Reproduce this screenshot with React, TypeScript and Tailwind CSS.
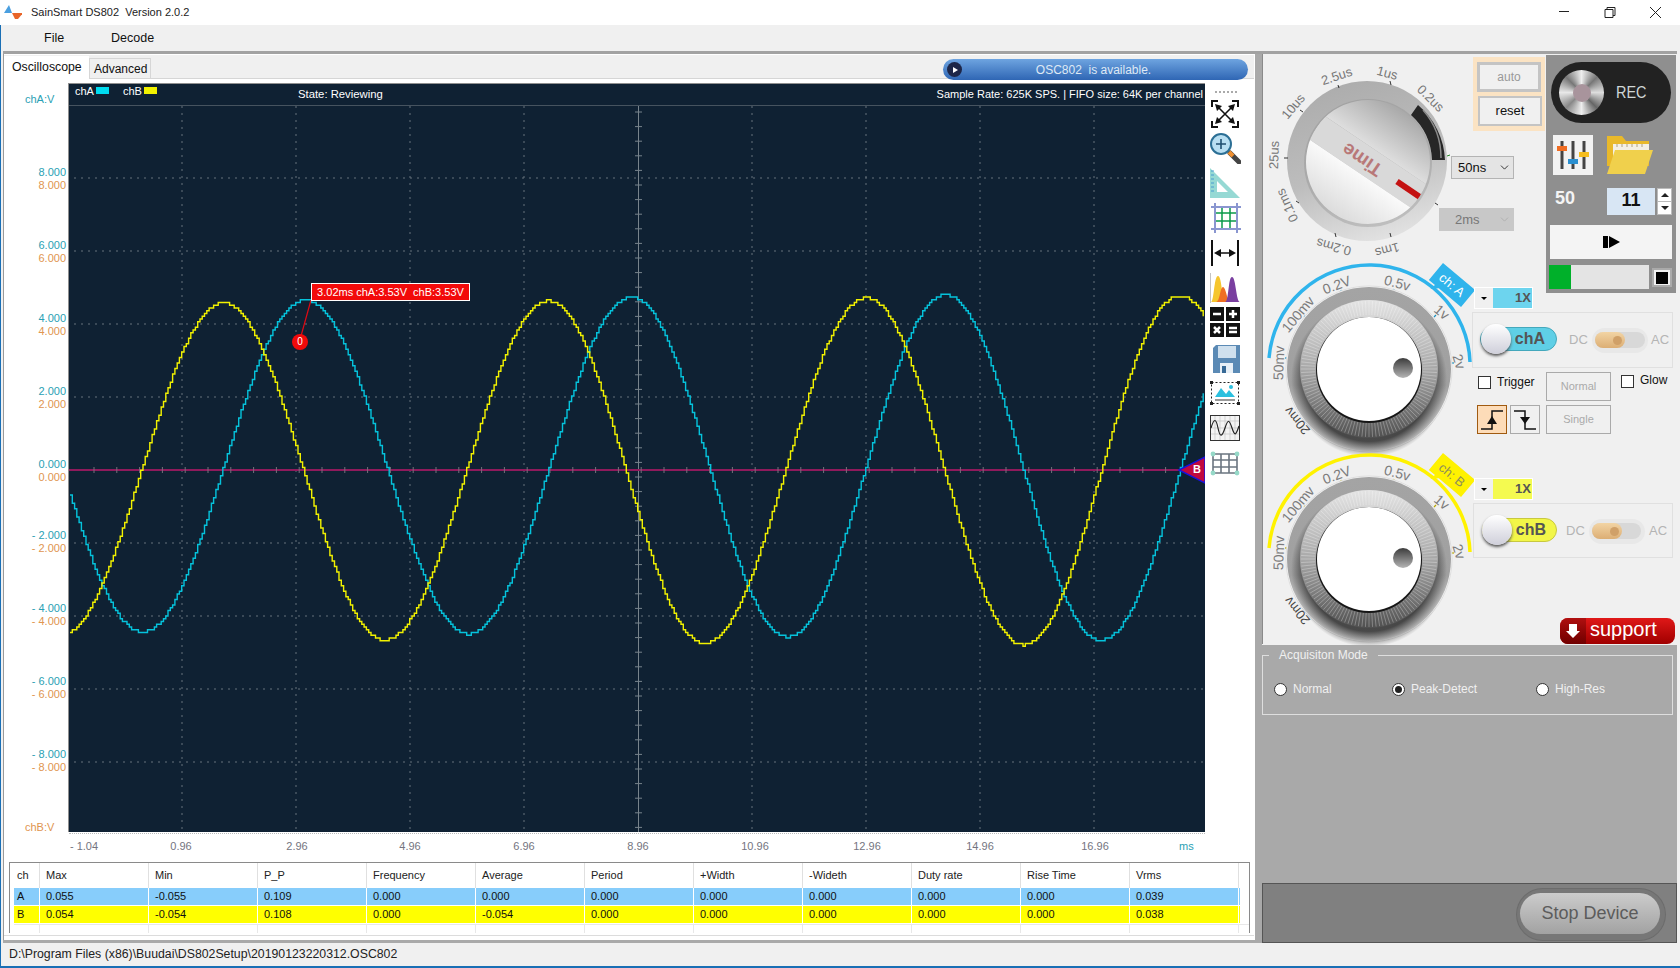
import { ChevronDown } from "lucide-react";

type Extreme = [number, number];

const cyanPoints: Extreme[] = [
  [-20, 302], [142, 632], [305, 300], [468, 634], [631, 297], [787, 637], [945, 295], [1100, 640], [1262, 292],
];
const yellowPoints: Extreme[] = [
  [60, 635], [223, 303], [384, 640], [548, 301], [704, 643], [866, 298], [1023, 645], [1179, 296], [1340, 648],
];

// stepped trace, looks like the sampled signal on the scope
function tracePath(points: Extreme[]) {
  let d = "";
  for (let x = 70; x <= 1205; x += 2.28) {
    const i = points.findIndex((p, n) => x >= p[0] && x < points[n + 1][0]);
    const [x0, y0] = points[i];
    const [x1, y1] = points[i + 1];
    const t = (1 - Math.cos((Math.PI * (x - x0)) / (x1 - x0))) / 2;
    const y = Math.round((y0 + (y1 - y0) * t) / 2.75) * 2.75;
    d += d ? `H${x.toFixed(1)}V${y.toFixed(1)}` : `M${x} ${y.toFixed(1)}`;
  }
  return d;
}

const gridX = [182, 296, 410, 524, 752, 866, 980, 1094];
const gridY = [178, 251, 324, 397, 543, 616, 689, 762];
const voltLabels = ["8.000", "6.000", "4.000", "2.000", "0.000", "- 2.000", "- 4.000", "- 6.000", "- 8.000"];
const timeLabels: [string, number][] = [
  ["- 1.04", 84], ["0.96", 181], ["2.96", 297], ["4.96", 410], ["6.96", 524],
  ["8.96", 638], ["10.96", 755], ["12.96", 867], ["14.96", 980], ["16.96", 1095],
];

const columns = ["ch", "Max", "Min", "P_P", "Frequency", "Average", "Period", "+Width", "-Wideth", "Duty rate", "Rise Time", "Vrms"];
const rowA = ["A", "0.055", "-0.055", "0.109", "0.000", "0.000", "0.000", "0.000", "0.000", "0.000", "0.000", "0.039"];
const rowB = ["B", "0.054", "-0.054", "0.108", "0.000", "-0.054", "0.000", "0.000", "0.000", "0.000", "0.000", "0.038"];

function Plot() {
  const hTicks = [];
  for (let x = 94; x < 1180; x += 22.8) hTicks.push(x);
  const vTicks = [];
  for (let y = 112; y < 832; y += 14.6) vTicks.push(y);
  return (
    <svg className="absolute left-[69px] top-[84px]" width="1136" height="748" viewBox="69 84 1136 748">
      <rect x="69" y="84" width="1136" height="748" fill="#0f2133" />
      <line x1="69" x2="1205" y1="105.5" y2="105.5" stroke="#46535f" />
      {gridX.map((x) => (
        <line key={x} x1={x} x2={x} y1="106" y2="832" stroke="#66727c" strokeDasharray="2 5" />
      ))}
      {gridY.map((y) => (
        <line key={y} x1="74" x2="1205" y1={y} y2={y} stroke="#66727c" strokeDasharray="2 5" />
      ))}
      <line x1="638.5" x2="638.5" y1="106" y2="832" stroke="#77838c" />
      {vTicks.map((y) => (
        <line key={y} x1="635" x2="642" y1={y} y2={y} stroke="#77838c" />
      ))}
      <line x1="69" x2="1180" y1="470" y2="470" stroke="#8f1a5c" strokeWidth="2" />
      {hTicks.map((x) => (
        <line key={x} x1={x} x2={x} y1="467" y2="473" stroke="#77707c" />
      ))}
      <path d={tracePath(cyanPoints)} fill="none" stroke="#05c3dc" strokeWidth="1.4" />
      <path d={tracePath(yellowPoints)} fill="none" stroke="#f2f200" strokeWidth="1.4" />
      <polygon points="1179,470 1205,457 1205,483" fill="#c0083f" stroke="#1414e0" strokeWidth="1.5" />
      <line x1="311" y1="300" x2="301" y2="336" stroke="#e00a14" strokeWidth="1.2" />
      <circle cx="300" cy="342" r="8" fill="#f20a0a" />
    </svg>
  );
}

function TimeKnob() {
  const ticks: [number, number, number, number][] = [
    [1338, 85, 1339, 88], [1390, 81, 1391, 85], [1300, 110, 1303, 112], [1284, 158, 1288, 158],
    [1296, 201, 1299, 203], [1335, 233, 1336, 237], [1390, 233, 1391, 237], [1435, 203, 1438, 205],
  ];
  const labels: [string, number, number, number][] = [
    ["2.5us", 1337, 77, -18], ["1us", 1387, 74, 15], ["0.2us", 1430, 99, 45], ["10us", 1294, 107, -50],
    ["25us", 1275, 155, -88], ["0.1ms", 1288, 205, -115], ["0.2ms", 1334, 246, -165], ["1ms", 1387, 249, 165],
  ];
  return (
    <svg className="absolute left-[1262px] top-[60px]" width="210" height="205" viewBox="1262 60 210 205">
      <defs>
        <linearGradient id="timeRing" x1="0.3" y1="0" x2="0.6" y2="1">
          <stop offset="0" stopColor="#acacac" />
          <stop offset="0.55" stopColor="#bdbdbd" />
          <stop offset="1" stopColor="#e2e2e2" />
        </linearGradient>
        <linearGradient id="timeTop" x1="0" y1="0" x2="0" y2="1">
          <stop offset="0" stopColor="#a9a9a9" />
          <stop offset="1" stopColor="#dedede" />
        </linearGradient>
        <linearGradient id="timeLow" x1="0" y1="0" x2="0" y2="1">
          <stop offset="0" stopColor="#fafafa" />
          <stop offset="1" stopColor="#dcdcdc" />
        </linearGradient>
        <clipPath id="timeClip">
          <circle cx="0" cy="0" r="62" />
        </clipPath>
      </defs>
      <circle cx="1367" cy="161" r="80" fill="url(#timeRing)" />
      <path d="M1418 105 A76 76 0 0 1 1445 160 L1432 160 A64 64 0 0 0 1411 115 Z" fill="#262626" />
      <path d="M1423 110 A72 72 0 0 1 1441 158" fill="none" stroke="#8a8a8a" strokeWidth="1.5" />
      <circle cx="1368" cy="163" r="64" fill="#8a8a8a" opacity="0.35" />
      <g transform="translate(1368 162) rotate(34)" clipPath="url(#timeClip)">
        <rect x="-62" y="-62" width="124" height="48" fill="url(#timeTop)" />
        <rect x="-62" y="-14" width="124" height="28" fill="#d9d9d9" />
        <rect x="-62" y="14" width="124" height="48" fill="url(#timeLow)" />
        <rect x="35" y="-3" width="28" height="6" fill="#c41212" />
        <text x="-6" y="0" transform="rotate(180 -6 0)" textAnchor="middle" fontSize="19" fontWeight="700" fill="#b87878" dominantBaseline="middle">
          Time
        </text>
      </g>
      {ticks.map(([x1, y1, x2, y2]) => (
        <line key={x1} x1={x1} y1={y1} x2={x2} y2={y2} stroke="#333" />
      ))}
      <line x1="1447" y1="156" x2="1450" y2="155" stroke="#2a8a2a" />
      {labels.map(([t, x, y, r]) => (
        <text key={t} x={x} y={y} transform={`rotate(${r} ${x} ${y})`} textAnchor="middle" dominantBaseline="middle" fontSize="13" fill="#777">
          {t}
        </text>
      ))}
    </svg>
  );
}

type DialProps = {
  id: string;
  top: string;
  color: string;
  tick: string;
  tag: string;
  tagText: string;
};

function Dial({ id, top, color, tick, tag, tagText }: DialProps) {
  const labels: [string, number, number, number][] = [
    ["50mv", 1280, 363, -88], ["100mv", 1299, 315, -50], ["0.2V", 1337, 286, -20],
    ["0.5v", 1397, 284, 15], ["1v", 1441, 313, 40], ["2v", 1458, 362, 72],
  ];
  const marks: [number, number, number, number][] = [
    [1285, 358, 1288, 358], [1304, 316, 1307, 318], [1341, 290, 1342, 293],
    [1394, 289, 1393, 292], [1436, 315, 1433, 318], [1451, 363, 1454, 363],
  ];
  const knurl = Array.from({ length: 120 }, (_, i) => (i * Math.PI) / 60);
  return (
    <svg className={`absolute left-[1262px] ${top}`} width="230" height="200" viewBox="1262 258 230 200">
      <defs>
        <linearGradient id={`${id}Outer`} x1="0" y1="0" x2="0" y2="1">
          <stop offset="0" stopColor="#a4a4a4" />
          <stop offset="0.6" stopColor="#a0a0a0" />
          <stop offset="1" stopColor="#ededed" />
        </linearGradient>
        <linearGradient id={`${id}Knurl`} x1="0" y1="0" x2="0" y2="1">
          <stop offset="0" stopColor="#e4e4e4" />
          <stop offset="0.5" stopColor="#a8a8a8" />
          <stop offset="1" stopColor="#505050" />
        </linearGradient>
        <radialGradient id={`${id}Shade`} cx="0.5" cy="0.5" r="0.5">
          <stop offset="0.8" stopColor="#2e2e2e" stopOpacity="0.85" />
          <stop offset="1" stopColor="#2e2e2e" stopOpacity="0" />
        </radialGradient>
        <linearGradient id={`${id}Dimple`} x1="0" y1="0" x2="0" y2="1">
          <stop offset="0" stopColor="#3c3c3c" />
          <stop offset="1" stopColor="#b4b4b4" />
        </linearGradient>
      </defs>
      <path d="M1269 358 A100.68 100.68 0 0 1 1470 362" fill="none" stroke={color} strokeWidth="3.5" />
      {marks.map(([x1, y1, x2, y2]) => (
        <line key={x1} x1={x1} y1={y1} x2={x2} y2={y2} stroke={tick} strokeWidth="1.2" />
      ))}
      <circle cx="1369" cy="369" r="83" fill="#fafafa" stroke="#dedede" />
      <circle cx="1369" cy="369" r="82" fill={`url(#${id}Outer)`} />
      <circle cx="1369" cy="379" r="78" fill={`url(#${id}Shade)`} />
      <circle cx="1369" cy="369" r="69" fill={`url(#${id}Knurl)`} />
      {knurl.map((a) => (
        <line
          key={a}
          x1={1369 + Math.cos(a) * 54}
          y1={369 + Math.sin(a) * 54}
          x2={1369 + Math.cos(a) * 68}
          y2={369 + Math.sin(a) * 68}
          stroke="#ffffff"
          strokeOpacity="0.28"
        />
      ))}
      <circle cx="1369" cy="370" r="53" fill="#161616" />
      <circle cx="1369" cy="369" r="52" fill="#ffffff" />
      <circle cx="1403" cy="368" r="10" fill={`url(#${id}Dimple)`} />
      {labels.map(([t, x, y, r]) => (
        <text key={t} x={x} y={y} transform={`rotate(${r} ${x} ${y})`} textAnchor="middle" dominantBaseline="middle" fontSize="14" fill="#7c7c7c">
          {t}
        </text>
      ))}
      <text x="1298" y="420" transform="rotate(-130 1298 420)" textAnchor="middle" dominantBaseline="middle" fontSize="13" fill="#444">
        20mv
      </text>
      <g transform="translate(1452 285) rotate(40)">
        <polygon points="-21,-11 21,-11 21,11 -8,11 -14,17 -13,11 -21,11" fill={color} />
        <text x="0" y="1" textAnchor="middle" dominantBaseline="middle" fontSize="13" fill={tagText}>
          {tag}
        </text>
      </g>
    </svg>
  );
}

function ToolIcons() {
  return (
    <>
      <div className="absolute left-[1215px] top-[91px] w-[22px] border-t-2 border-dotted border-[#aaa]" />
      <svg className="absolute left-[1211px] top-[100px]" width="28" height="28" viewBox="0 0 28 28" fill="none" stroke="#111">
        <path d="M1 7V1H7M21 1H27V7M27 21V27H21M7 27H1V21" strokeWidth="2" />
        <path d="M6 6L22 22M22 6L6 22" strokeWidth="1.6" />
        <path d="M4 4L11 6L6 11ZM24 4L17 6L22 11ZM24 24L17 22L22 17ZM4 24L11 22L6 17Z" fill="#111" stroke="none" />
      </svg>
      <svg className="absolute left-[1210px] top-[133px]" width="31" height="31" viewBox="0 0 31 31" fill="none">
        <line x1="20" y1="20" x2="29" y2="29" stroke="#444" strokeWidth="5" strokeLinecap="round" />
        <line x1="19" y1="19" x2="23" y2="23" stroke="#f09030" strokeWidth="4" />
        <circle cx="11" cy="11" r="10" fill="#b8dff2" stroke="#2b6f95" strokeWidth="2" />
        <path d="M6 11H16M11 6V16" stroke="#1f4f70" strokeWidth="1.6" />
      </svg>
      <svg className="absolute left-[1210px] top-[168px]" width="30" height="30" viewBox="0 0 30 30">
        <path d="M0 0L30 30H0ZM7 13V24H18Z" fill="#96d9d4" fillRule="evenodd" />
        <path d="M1 3H4M1 7H4M1 11H4M1 15H4M1 19H4M1 23H4" stroke="#4a9ccf" />
      </svg>
      <svg className="absolute left-[1211px] top-[203px]" width="30" height="30" viewBox="0 0 30 30" fill="none">
        <path d="M4 0V30M26 0V30M0 4H30M0 26H30" stroke="#8a96d0" strokeWidth="2" />
        <path d="M5 10H25M5 18H25M11 5V25M19 5V25" stroke="#0a9a4a" strokeWidth="1.5" />
      </svg>
      <svg className="absolute left-[1211px] top-[240px]" width="28" height="26" viewBox="0 0 28 26" fill="none">
        <path d="M1 0V26M27 0V26" stroke="#111" strokeWidth="2" />
        <path d="M5 13H23" stroke="#111" strokeWidth="1.5" />
        <path d="M3 13L10 9V17ZM25 13L18 9V17Z" fill="#111" />
      </svg>
      <svg className="absolute left-[1210px] top-[273px]" width="30" height="30" viewBox="0 0 30 30">
        <path d="M0 0V30" stroke="#888" />
        <path d="M1 29C4 29 4 3 8 3C12 3 12 29 15 29Z" fill="#f6c62e" />
        <path d="M6 29C10 29 10 14 13 14C16 14 17 29 21 29Z" fill="#ef6f24" />
        <path d="M15 29C19 29 18 4 22 4C26 4 26 29 30 29Z" fill="#7a3fa0" />
      </svg>
      <svg className="absolute left-[1210px] top-[307px]" width="30" height="30" viewBox="0 0 30 30">
        <rect width="14" height="14" fill="#111" />
        <rect x="16" width="14" height="14" fill="#111" />
        <rect y="16" width="14" height="14" fill="#111" />
        <rect x="16" y="16" width="14" height="14" fill="#111" />
        <path d="M3 7H11M19 7H27M23 3V11M4 20L10 26M10 20L4 26M19 21H27M19 25H27" stroke="#fff" strokeWidth="2.5" />
      </svg>
      <svg className="absolute left-[1213px] top-[345px]" width="27" height="28" viewBox="0 0 27 28">
        <path d="M3 0H27V28H0V3Z" fill="#5b8ab5" />
        <rect x="5" y="1" width="18" height="12" fill="#cfe0ee" />
        <rect x="7" y="18" width="13" height="10" fill="#e8f0f7" />
        <rect x="9" y="21" width="4" height="7" fill="#386a96" />
      </svg>
      <svg className="absolute left-[1210px] top-[381px]" width="30" height="24" viewBox="0 0 30 24" fill="none">
        <rect x="1.5" y="1.5" width="27" height="21" stroke="#222" strokeDasharray="2 2" />
        <rect width="3" height="3" fill="#222" />
        <rect x="27" width="3" height="3" fill="#222" />
        <rect y="21" width="3" height="3" fill="#222" />
        <rect x="27" y="21" width="3" height="3" fill="#222" />
        <path d="M5 16L11 7L16 13L19 9L25 16Z" fill="#2bc0df" />
        <circle cx="21" cy="6" r="2" fill="#2bc0df" />
        <path d="M5 19H25" stroke="#777" strokeWidth="1.5" />
      </svg>
      <svg className="absolute left-[1210px] top-[415px]" width="30" height="26" viewBox="0 0 30 26" fill="none">
        <rect x="0.5" y="0.5" width="29" height="25" fill="#f4f4f4" stroke="#333" />
        <path d="M5 1V25M10 1V25M15 1V25M20 1V25M25 1V25M1 6H29M1 13H29M1 19H29" stroke="#c4c4c4" strokeWidth="0.7" />
        <path d="M1 13C4 3 6 3 8 13S12 22 15 13S19 4 22 13S26 20 29 11" stroke="#222" strokeWidth="1.2" />
      </svg>
      <svg className="absolute left-[1210px] top-[451px]" width="30" height="25" viewBox="0 0 30 25" fill="none">
        <path d="M3 3H27M3 9H27M3 16H27M3 22H27" stroke="#6b7580" strokeWidth="1.6" />
        <path d="M3 3V22M11 3V22M19 3V22M27 3V22" stroke="#6b7580" strokeWidth="1.6" />
        <circle cx="3" cy="3" r="2.4" fill="#96d9c8" />
        <circle cx="27" cy="3" r="2.4" fill="#96d9c8" />
        <circle cx="3" cy="22" r="2.4" fill="#96d9c8" />
        <circle cx="27" cy="22" r="2.4" fill="#96d9c8" />
      </svg>
    </>
  );
}

function EdgeIcon({ falling }: { falling?: boolean }) {
  return (
    <svg width="24" height="24" viewBox="0 0 24 24" fill="none">
      <path d={falling ? "M1 3H12V21H23" : "M1 21H12V3H23"} stroke="#111" strokeWidth="1.5" />
      <path d={falling ? "M12 16L7 9H17Z" : "M12 8L7 16H17Z"} fill="#111" />
    </svg>
  );
}

export default function App() {
  return (
    <div className="relative h-[968px] w-[1680px] overflow-hidden bg-[#f0f0f0] font-[Liberation_Sans,Arial,sans-serif] [font-family:Liberation_Sans,Arial,sans-serif] text-[12px] text-[#111]">
      {/* title bar */}
      <div className="absolute inset-x-0 top-0 h-[25px] bg-white" />
      <svg className="absolute left-[4px] top-[4px]" width="18" height="16" viewBox="0 0 18 16">
        <path d="M0 9L5 1L8 9Z" fill="#4a9fe0" />
        <path d="M8 9H19L14 15H11Z" fill="#e8652a" />
      </svg>
      <div className="absolute left-[31px] top-[5px] whitespace-pre text-[11px] leading-[15px] text-[#222]">SainSmart DS802  Version 2.0.2</div>
      <svg className="absolute left-[1555px] top-[4px]" width="115" height="16" viewBox="0 0 115 16" fill="none" stroke="#222">
        <path d="M4 7.5H14" />
        <path d="M50 5.5H58V13.5H50ZM52 5.5V3.5H60V11.5H58" />
        <path d="M95 3L106 14M106 3L95 14" />
      </svg>

      {/* menu */}
      <div className="absolute left-[44px] top-[31px] text-[12.5px] leading-[15px]">File</div>
      <div className="absolute left-[111px] top-[31px] text-[12.5px] leading-[15px]">Decode</div>
      <div className="absolute left-[3px] right-[3px] top-[51px] h-[3px] bg-[#a2a2a2]" />

      {/* left panel */}
      <div className="absolute left-[3px] top-[54px] h-[886px] w-[1252px] border-l border-[#9a9a9a] bg-white" />
      <div className="absolute left-[4px] top-[55px] h-[24px] w-[1250px] border-b border-[#d6d6d6] bg-[#f0f0f0]" />
      <div className="absolute left-[4px] top-[56px] h-[24px] w-[85px] bg-white pl-[8px] pt-[4px] text-[12.3px] leading-[15px]">Oscilloscope</div>
      <div className="absolute left-[89px] top-[58px] h-[21px] w-[62px] border border-[#d6d6d6] pl-[4px] pt-[3px] text-[12px] leading-[15px]">Advanced</div>
      <div className="absolute left-[943px] top-[59px] flex h-[21px] w-[305px] items-center justify-center rounded-full bg-linear-to-b from-[#6ea4e0] to-[#2f66b4] text-[12px] text-[#dfe9f5]">
        <span className="whitespace-pre pr-[4px]">OSC802  is available.</span>
      </div>
      <div className="absolute left-[947px] top-[62px] flex h-[15px] w-[15px] items-center justify-center rounded-full bg-[#1d2648]">
        <div className="ml-[1px] h-0 w-0 border-y-[3px] border-l-[5px] border-y-transparent border-l-white" />
      </div>

      {/* plot */}
      <div className="absolute left-[68px] top-[83px] h-[749px] w-[2px] bg-[#8f8f8f]" />
      <div className="absolute left-[68px] top-[83px] h-[2px] w-[1137px] bg-[#8f8f8f]" />
      <Plot />
      <div className="absolute left-[25px] top-[92px] text-[11px] leading-[14px] text-[#2a9fb4]">chA:V</div>
      <div className="absolute left-[25px] top-[820px] text-[11px] leading-[14px] text-[#e09550]">chB:V</div>
      {voltLabels.map((v, i) => (
        <div key={v}>
          <div className="absolute right-[1614px] text-right text-[11px] leading-[14px] text-[#2a9fb4]" style={{ top: 165 + i * 73 - (i > 4 ? 2 : 0) }}>{v}</div>
          <div className="absolute right-[1614px] text-right text-[11px] leading-[14px] text-[#e09550]" style={{ top: 178 + i * 73 - (i > 4 ? 2 : 0) }}>{v}</div>
        </div>
      ))}
      {timeLabels.map(([t, x]) => (
        <div key={t} className="absolute top-[839px] w-[60px] -translate-x-1/2 text-center text-[11px] leading-[14px] text-[#747480]" style={{ left: x }}>{t}</div>
      ))}
      <div className="absolute left-[1179px] top-[839px] text-[11px] leading-[14px] text-[#2a9fb4]">ms</div>
      <div className="absolute left-[69px] top-[833px] w-[1136px] border-t border-dotted border-[#bbb]" />

      <div className="absolute left-[75px] top-[84px] text-[11px] leading-[14px] text-white">chA</div>
      <div className="absolute left-[96px] top-[87px] h-[7px] w-[13px] bg-[#00dcf0]" />
      <div className="absolute left-[123px] top-[84px] text-[11px] leading-[14px] text-white">chB</div>
      <div className="absolute left-[144px] top-[87px] h-[7px] w-[13px] bg-[#f2f200]" />
      <div className="absolute left-[298px] top-[87px] text-[11.3px] leading-[14px] text-white">State: Reviewing</div>
      <div className="absolute right-[477px] top-[87px] whitespace-nowrap text-[11px] leading-[14px] text-white">Sample Rate: 625K SPS. | FIFO size: 64K per channel</div>

      <div className="absolute left-[311px] top-[283px] flex h-[18px] w-[159px] items-center justify-center whitespace-pre border border-white bg-[#f20a0a] text-[11px] text-white">3.02ms chA:3.53V  chB:3.53V</div>
      <div className="absolute left-[296px] top-[335px] w-[8px] text-center text-[10px] leading-[14px] text-white">0</div>
      <div className="absolute left-[1193px] top-[462px] text-[11px] font-bold leading-[14px] text-white">B</div>

      <ToolIcons />

      {/* table */}
      <div className="absolute left-[9px] top-[862px] h-[71px] w-[1241px] border-x border-t border-[#8a8a8a] bg-white pl-[4px]">
        <div className="grid h-[25px] grid-cols-[26px_repeat(11,109px)] items-center">
          {columns.map((c, i) => (
            <div key={c} className={`flex h-full items-center border-r border-[#e0e0e0] text-[11px] text-[#222] ${i ? "pl-[6px]" : "pl-[3px]"}`}>{c}</div>
          ))}
        </div>
        <div className="grid h-[17px] w-[1226px] grid-cols-[26px_repeat(11,109px)] bg-[#87cdfb]">
          {rowA.map((c, i) => (
            <div key={i} className={`flex items-center border-r border-white text-[11px] leading-none ${i ? "pl-[6px]" : "pl-[3px]"}`}>{c}</div>
          ))}
        </div>
        <div className="mt-[1px] grid h-[17px] w-[1226px] grid-cols-[26px_repeat(11,109px)] bg-[#ffff00]">
          {rowB.map((c, i) => (
            <div key={i} className={`flex items-center border-r border-white text-[11px] leading-none ${i ? "pl-[6px]" : "pl-[3px]"}`}>{c}</div>
          ))}
        </div>
        <div className="mt-[1px] grid h-[9px] grid-cols-[26px_repeat(11,109px)] border-t border-[#e8e8e8]">
          {columns.map((c) => (
            <div key={c} className="border-r border-[#e8e8e8]" />
          ))}
        </div>
      </div>
      <div className="absolute left-[4px] top-[935px] h-[1px] w-[1250px] bg-[#dcdcdc]" />

      {/* gray frame between panels */}
      <div className="absolute left-[1255px] top-[54px] h-[889px] w-[7px] bg-[#a9a9a9]" />
      <div className="absolute left-[3px] top-[940px] h-[3px] w-[1259px] bg-[#a9a9a9]" />

      {/* status bar */}
      <div className="absolute left-[9px] top-[947px] text-[12.3px] leading-[15px] text-[#222]">D:\Program Files (x86)\Buudai\DS802Setup\20190123220312.OSC802</div>
      <div className="absolute inset-x-0 bottom-0 h-[2px] bg-[#1a6fb5]" />
      <div className="absolute bottom-0 left-0 top-[25px] w-[1px] bg-[#1a6fb5]" />

      {/* right panel */}
      <div className="absolute left-[1262px] top-[54px] h-[590px] w-[414px] border-l border-[#8a8a8a] bg-[#f0f0f0]" />
      <TimeKnob />
      <div className="absolute left-[1473px] top-[57px] h-[74px] w-[72px] bg-[#fbe3c3]" />
      <div className="absolute left-[1477px] top-[62px] flex h-[30px] w-[64px] items-center justify-center border-[3px] border-[#c4c4c4] bg-[#f0f0f0] text-[12px] text-[#999]">auto</div>
      <div className="absolute left-[1478px] top-[96px] flex h-[30px] w-[64px] items-center justify-center border-2 border-[#c4c4c4] bg-[#f0f0f0] text-[13px] text-[#111]">reset</div>

      <div className="absolute left-[1451px] top-[156px] flex h-[23px] w-[63px] items-center justify-between border border-[#b4b4b4] bg-[#e4e4e4] pl-[6px] pr-[2px] text-[13px]">
        50ns
        <ChevronDown size={13} strokeWidth={1.5} />
      </div>
      <div className="absolute left-[1439px] top-[208px] flex h-[23px] w-[75px] items-center justify-between bg-[#c8c8c8] pl-[16px] pr-[3px] text-[13px] text-[#777]">
        2ms
        <ChevronDown size={13} strokeWidth={1.5} className="text-[#aaa]" />
      </div>

      {/* record panel */}
      <div className="absolute left-[1546px] top-[55px] h-[238px] w-[130px] bg-[#8f8f8f]" />
      <div className="absolute left-[1551px] top-[62px] h-[61px] w-[120px] rounded-full bg-[#222]" />
      <div className="absolute left-[1559px] top-[70px] flex h-[45px] w-[45px] items-center justify-center rounded-full bg-[conic-gradient(#eee,#777,#ddd,#666,#eee,#888,#e8e8e8,#777,#eee)]">
        <div className="h-[18px] w-[18px] rounded-full bg-[#a8949c]" />
      </div>
      <div className="absolute left-[1616px] top-[83px] origin-left scale-x-[0.85] text-[17px] leading-[20px] text-[#cfd6d6]">REC</div>

      <svg className="absolute left-[1553px] top-[135px]" width="40" height="40" viewBox="0 0 40 40">
        <rect width="40" height="40" fill="#f2f2f2" />
        <path d="M9 6V34M20 6V34M31 6V34" stroke="#444" strokeWidth="3" />
        <rect x="4" y="11" width="10" height="5" fill="#ef6c22" />
        <rect x="15" y="24" width="10" height="5" fill="#2a8fd0" />
        <rect x="26" y="17" width="10" height="5" fill="#f5bd1e" />
      </svg>
      <svg className="absolute left-[1607px] top-[136px]" width="47" height="38" viewBox="0 0 47 38">
        <path d="M0 0H15L19 5H42V30H0Z" fill="#e9b92a" />
        <rect x="6" y="8" width="36" height="14" fill="#f4f0e4" />
        <path d="M10 8V11M15 8V11M20 8V11M25 8V11M30 8V11M35 8V11" stroke="#b0a080" />
        <path d="M8 14H46L38 38H0Z" fill="#f0d04c" />
      </svg>

      <div className="absolute left-[1555px] top-[187px] text-[18px] font-bold leading-[22px] text-[#f4f4f4]">50</div>
      <div className="absolute left-[1607px] top-[188px] flex h-[27px] w-[48px] items-center justify-center bg-[#d8e6f4] pb-[3px] text-[18px] font-bold">11</div>
      <div className="absolute left-[1657px] top-[188px] flex h-[27px] w-[15px] flex-col border border-[#bbb] bg-white">
        <div className="flex flex-1 items-center justify-center border-b border-[#bbb]">
          <div className="h-0 w-0 border-x-[4px] border-b-[4px] border-x-transparent border-b-[#222]" />
        </div>
        <div className="flex flex-1 items-center justify-center">
          <div className="h-0 w-0 border-x-[4px] border-t-[4px] border-x-transparent border-t-[#222]" />
        </div>
      </div>
      <div className="absolute left-[1550px] top-[225px] flex h-[34px] w-[122px] items-center justify-center gap-[1px] bg-[#f4f4f4]">
        <div className="h-[12px] w-[5px] bg-black" />
        <div className="h-0 w-0 border-y-[6px] border-l-[11px] border-y-transparent border-l-black" />
      </div>
      <div className="absolute left-[1549px] top-[265px] h-[24px] w-[100px] bg-[#e4e4e4]">
        <div className="h-full w-[22px] bg-[#00b02a]" />
      </div>
      <div className="absolute left-[1652px] top-[268px] flex h-[19px] w-[20px] items-center justify-center border-2 border-[#aaa] bg-[#f0f0f0]">
        <div className="h-[12px] w-[12px] bg-black" />
      </div>

      <Dial id="dialA" top="top-[258px]" color="#2fb4ec" tick="#1a8fc0" tag="ch: A" tagText="#ffffff" />
      <Dial id="dialB" top="top-[448px]" color="#fff200" tick="#b8a800" tag="ch: B" tagText="#8f8f58" />

      {/* channel A */}
      <div className="absolute left-[1474px] top-[287px] flex h-[22px] w-[59px] border border-white">
        <div className="flex w-[18px] items-center justify-center bg-[#f0f0f0]">
          <div className="h-0 w-0 border-x-[3px] border-t-[3px] border-x-transparent border-t-black" />
        </div>
        <div className="flex flex-1 items-center justify-end bg-[#6dd4ee] pr-[1px] text-[13px] font-bold text-[#555]">1X</div>
      </div>
      <div className="absolute left-[1472px] top-[312px] h-[56px] w-[201px] border border-[#e0e0e0]" />
      <div className="absolute left-[1480px] top-[327px] flex h-[24px] w-[77px] items-center justify-end rounded-full border border-[#44a8bc] bg-[#5fcfe6] pr-[11px] text-[16px] font-bold text-[#555]">chA</div>
      <div className="absolute left-[1481px] top-[324px] h-[30px] w-[30px] rounded-full bg-linear-to-b from-white to-[#cfcfda] shadow-[0_2px_3px_#555]" />
      <div className="absolute left-[1569px] top-[332px] text-[13px] leading-[16px] text-[#b4b4b4]">DC</div>
      <div className="absolute left-[1592px] top-[328px] h-[25px] w-[56px] rounded-full bg-[#e8e8e8]" />
      <div className="absolute left-[1595px] top-[332px] h-[16px] w-[50px] rounded-full bg-[#d8d8d8]">
        <div className="flex h-full w-[30px] items-center justify-end rounded-full bg-linear-to-b from-[#f2d4a4] to-[#dcae74] pr-[3px]">
          <div className="h-[9px] w-[9px] rounded-full bg-[#d0a068]" />
        </div>
      </div>
      <div className="absolute left-[1651px] top-[332px] text-[13px] leading-[16px] text-[#b4b4b4]">AC</div>

      <div className="absolute left-[1478px] top-[376px] h-[13px] w-[13px] border border-[#333] bg-white" />
      <div className="absolute left-[1497px] top-[375px] text-[12px] leading-[15px]">Trigger</div>
      <div className="absolute left-[1546px] top-[372px] flex h-[29px] w-[65px] items-center justify-center border border-[#aaa] text-[11px] text-[#aaa]">Normal</div>
      <div className="absolute left-[1621px] top-[375px] h-[13px] w-[13px] border border-[#333] bg-white" />
      <div className="absolute left-[1640px] top-[373px] text-[12px] leading-[15px]">Glow</div>
      <div className="absolute left-[1477px] top-[405px] flex h-[29px] w-[30px] items-center justify-center border border-[#a05a10] bg-[#fddcb8]"><EdgeIcon /></div>
      <div className="absolute left-[1510px] top-[405px] flex h-[29px] w-[30px] items-center justify-center border border-[#aaa]"><EdgeIcon falling /></div>
      <div className="absolute left-[1546px] top-[405px] flex h-[29px] w-[65px] items-center justify-center border border-[#aaa] text-[11px] text-[#aaa]">Single</div>

      {/* channel B */}
      <div className="absolute left-[1474px] top-[478px] flex h-[22px] w-[59px] border border-white">
        <div className="flex w-[18px] items-center justify-center bg-[#f0f0f0]">
          <div className="h-0 w-0 border-x-[3px] border-t-[3px] border-x-transparent border-t-black" />
        </div>
        <div className="flex flex-1 items-center justify-end bg-[#f4fa50] pr-[1px] text-[13px] font-bold text-[#555]">1X</div>
      </div>
      <div className="absolute left-[1473px] top-[503px] h-[55px] w-[200px] border border-[#e0e0e0]" />
      <div className="absolute left-[1482px] top-[518px] flex h-[24px] w-[75px] items-center justify-end rounded-full border border-[#c8c840] bg-[#f2f648] pr-[10px] text-[16px] font-bold text-[#555]">chB</div>
      <div className="absolute left-[1482px] top-[515px] h-[30px] w-[30px] rounded-full bg-linear-to-b from-white to-[#cfcfda] shadow-[0_2px_3px_#555]" />
      <div className="absolute left-[1566px] top-[523px] text-[13px] leading-[16px] text-[#b4b4b4]">DC</div>
      <div className="absolute left-[1589px] top-[519px] h-[25px] w-[56px] rounded-full bg-[#e8e8e8]" />
      <div className="absolute left-[1592px] top-[523px] h-[16px] w-[49px] rounded-full bg-[#d8d8d8]">
        <div className="flex h-full w-[30px] items-center justify-end rounded-full bg-linear-to-b from-[#f2d4a4] to-[#dcae74] pr-[3px]">
          <div className="h-[9px] w-[9px] rounded-full bg-[#d0a068]" />
        </div>
      </div>
      <div className="absolute left-[1649px] top-[523px] text-[13px] leading-[16px] text-[#b4b4b4]">AC</div>

      <div className="absolute left-[1560px] top-[618px] flex h-[26px] w-[115px] overflow-hidden rounded-[8px] bg-linear-to-b from-[#e01818] to-[#a00000]">
        <div className="flex w-[26px] items-center justify-center bg-linear-to-b from-[#b01010] to-[#700000]">
          <svg width="14" height="16" viewBox="0 0 14 16">
            <path d="M3 1H11V8H14L7 15L0 8H3Z" fill="#fff" />
          </svg>
        </div>
        <div className="pl-[4px] text-[20px] leading-[22px] text-white">support</div>
      </div>

      {/* acquisition */}
      <div className="absolute left-[1262px] top-[645px] h-[238px] w-[415px] bg-[#a9a9a9]" />
      <div className="absolute left-[1262px] top-[655px] h-[60px] w-[411px] border border-[#dedede]" />
      <div className="absolute left-[1269px] top-[648px] whitespace-nowrap bg-[#a9a9a9] px-[10px] text-[12px] leading-[14px] text-[#f0f0f0]">Acquisiton Mode</div>
      <div className="absolute left-[1274px] top-[683px] h-[13px] w-[13px] rounded-full border border-[#333] bg-white" />
      <div className="absolute left-[1293px] top-[682px] text-[12px] leading-[15px] text-[#f0f0f0]">Normal</div>
      <div className="absolute left-[1392px] top-[683px] flex h-[13px] w-[13px] items-center justify-center rounded-full border border-[#333] bg-white">
        <div className="h-[7px] w-[7px] rounded-full bg-[#222]" />
      </div>
      <div className="absolute left-[1411px] top-[682px] text-[12px] leading-[15px] text-[#f0f0f0]">Peak-Detect</div>
      <div className="absolute left-[1536px] top-[683px] h-[13px] w-[13px] rounded-full border border-[#333] bg-white" />
      <div className="absolute left-[1555px] top-[682px] text-[12px] leading-[15px] text-[#f0f0f0]">High-Res</div>

      <div className="absolute left-[1262px] top-[883px] h-[60px] w-[415px] border border-[#555] bg-[#808080]" />
      <div className="absolute left-[1517px] top-[889px] h-[51px] w-[148px] rounded-full bg-[#777] ring-1 ring-[#6c6c6c]" />
      <div className="absolute left-[1520px] top-[893px] flex h-[41px] w-[140px] items-center justify-center rounded-full bg-linear-to-b from-[#cccccc] to-[#a2a2a2] text-[18px] text-[#5c5c5c]">Stop Device</div>
    </div>
  );
}
